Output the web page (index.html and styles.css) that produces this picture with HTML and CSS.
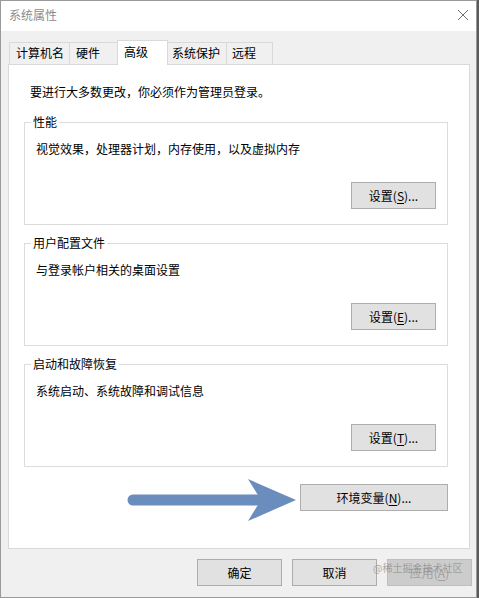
FILE: index.html
```html
<!DOCTYPE html>
<html lang="zh-CN">
<head>
<meta charset="utf-8">
<title>系统属性</title>
<link rel="stylesheet" href="styles.css">
</head>
<body>
<div class="window">
  <div class="titlebar">
    <span class="title">系统属性</span>
    <svg class="close" width="12" height="12" viewBox="0 0 12 12"><path d="M1 1 L11 11 M11 1 L1 11" stroke="#6f6f6f" stroke-width="1" fill="none"/></svg>
  </div>
  <div class="tabs">
    <div class="tab t1">计算机名</div>
    <div class="tab t2">硬件</div>
    <div class="tab sel">高级</div>
    <div class="tab t4">系统保护</div>
    <div class="tab t5">远程</div>
  </div>
  <div class="panel">
    <p class="intro">要进行大多数更改，你必须作为管理员登录。</p>
    <div class="groups">
      <div class="group">
        <span class="legend">性能</span>
        <p class="desc">视觉效果，处理器计划，内存使用，以及虚拟内存</p>
        <div class="grow"><button class="btn">设置(<u>S</u>)...</button></div>
      </div>
      <div class="group">
        <span class="legend">用户配置文件</span>
        <p class="desc">与登录帐户相关的桌面设置</p>
        <div class="grow"><button class="btn">设置(<u>E</u>)...</button></div>
      </div>
      <div class="group">
        <span class="legend">启动和故障恢复</span>
        <p class="desc">系统启动、系统故障和调试信息</p>
        <div class="grow"><button class="btn">设置(<u>T</u>)...</button></div>
      </div>
    </div>
    <div class="envrow">
      <svg class="arrow" width="172" height="44" viewBox="0 0 172 44">
        <line x1="8" y1="22" x2="140" y2="22" stroke="#6b8dbd" stroke-width="11" stroke-linecap="round"/>
        <path d="M123 1 L171 22 L123 43 L136 22 Z" fill="#6b8dbd"/>
      </svg>
      <button class="btn env">环境变量(<u>N</u>)...</button>
    </div>
  </div>
  <div class="footer">
    <button class="btn fbtn">确定</button>
    <button class="btn fbtn">取消</button>
    <button class="btn fbtn disabled">应用(<u>A</u>)</button>
  </div>
  <span class="watermark">@稀土掘金技术社区</span>
</div>
</body>
</html>
```

FILE: styles.css
```css
* { box-sizing: border-box; }
html, body { margin: 0; padding: 0; background: #5a5a5a; }
body { font-family: "Noto Sans CJK SC", "Noto Sans", sans-serif; font-size: 12px; color: #000; }
.window {
  position: relative;
  width: 477px;
  height: 598px;
  background: #f0f0f0;
  border: 1px solid #9a9a9a;
  display: flex;
  flex-direction: column;
}
.titlebar {
  height: 30px;
  background: #fff;
  display: flex;
  align-items: center;
  justify-content: space-between;
  padding: 0 7px 0 8px;
}
.title { color: #8c8c8c; font-size: 12px; line-height: 16px; margin-top: -2px; }
.close { margin-top: -2px; }
.tabs {
  display: flex;
  align-items: flex-end;
  height: 24px;
  margin-top: 9px;
  margin-left: 8px;
}
.tab {
  height: 22px;
  border: 1px solid #d9d9d9;
  border-bottom: none;
  margin-right: -1px;
  padding-left: 6px;
  line-height: 20px;
  background: #f0f0f0;
  white-space: nowrap;
}
.t1 { width: 61px; }
.t2 { width: 49px; }
.t4 { width: 60px; padding-left: 4px; }
.t5 { width: 47px; padding-left: 5px; }
.tab.sel {
  width: 51px;
  height: 25px;
  margin-bottom: -1px;
  background: #fff;
  position: relative;
  z-index: 2;
  line-height: 21px;
}
.panel {
  margin: 0 6px 0 7px;
  height: 485px;
  background: #fff;
  border: 1px solid #d9d9d9;
  padding: 19px 21px 0 15px;
}
.intro { margin: 0 0 0 6px; line-height: 16px; }
.groups {
  display: flex;
  flex-direction: column;
  gap: 18px;
  margin-top: 22px;
}
.group {
  position: relative;
  height: 103px;
  border: 1px solid #dcdcdc;
  padding: 18px 11px 15px 11px;
}
.legend {
  position: absolute;
  top: -9px;
  left: 6px;
  padding: 0 2px 0 2px;
  background: #fff;
  line-height: 16px;
}
.desc { margin: 0; line-height: 16px; }
.grow { display: flex; justify-content: flex-end; margin-top: 25px; }
.btn {
  font-family: inherit;
  font-size: 12px;
  color: #000;
  background: #e1e1e1;
  border: 1px solid #adadad;
  height: 27px;
  width: 85px;
  padding: 0;
  line-height: 16px;
  border-radius: 0;
}
.btn u { text-underline-offset: 2px; }
.envrow {
  display: flex;
  justify-content: flex-end;
  align-items: flex-start;
  margin-top: 17px;
  gap: 3px;
}
.arrow { margin-top: -6px; display: block; }
.btn.env { width: 148px; }
.footer {
  display: flex;
  justify-content: flex-end;
  gap: 10px;
  margin-top: 10px;
  padding-right: 4px;
}
.btn.disabled { background: #cccccc; border-color: #bfbfbf; color: #a0a0a0; }
.watermark {
  position: absolute;
  left: 372px;
  top: 560px;
  font-size: 10px;
  line-height: 14px;
  color: rgba(140, 140, 140, 0.75);
  white-space: nowrap;
}
```
